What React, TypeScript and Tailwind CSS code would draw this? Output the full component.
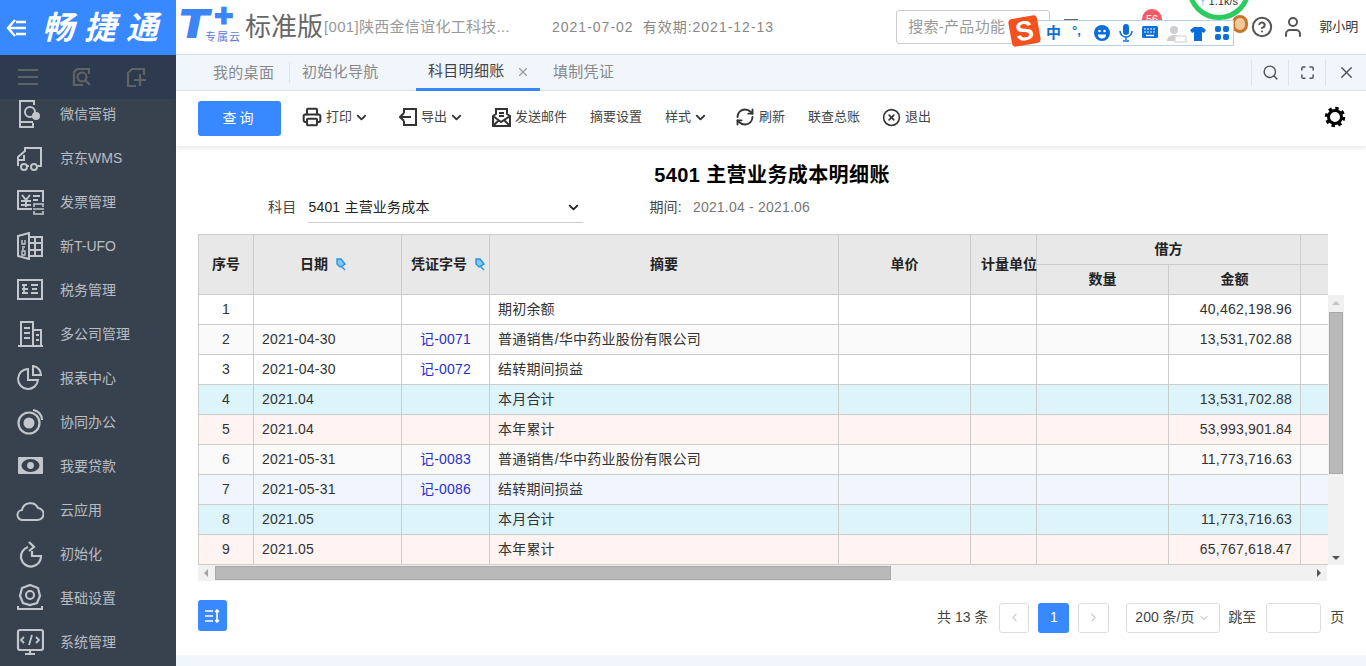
import type { ReactNode } from "react";
import { ChevronDown, ChevronLeft, ChevronRight, CircleHelp, CircleX, Maximize, Printer, RefreshCw, Search, User, X } from "lucide-react";

const FONT = "font-['Liberation_Sans','Noto_Sans_CJK_SC',sans-serif]";

function SideIcon({ children }: { children: ReactNode }) {
  return (
    <svg width="28" height="28" viewBox="0 0 28 28" fill="none" stroke="#c3c7cb" strokeWidth="2" className="shrink-0">
      {children}
    </svg>
  );
}

const menu: { label: string; icon: ReactNode }[] = [
  {
    label: "微信营销",
    icon: (
      <>
        <path d="M18 5V1H4v26h13v-4M4 22h13" />
        <circle cx="14" cy="12" r="5" />
        <circle cx="20" cy="16" r="4" fill="#c3c7cb" stroke="none" />
      </>
    ),
  },
  {
    label: "京东WMS",
    icon: (
      <>
        <path d="M2 22v-9l7-6V4h16v18h-3M13 22h-2" />
        <path d="M2 16h6v-5" />
        <circle cx="8" cy="23" r="3" />
        <circle cx="18" cy="23" r="3" />
      </>
    ),
  },
  {
    label: "发票管理",
    icon: (
      <>
        <path d="M16 21H2V3h25v11" />
        <path d="M6 7l4 5 4-5M5 13h10M5 17h10M10 12v7M17 8h7M17 12h5" />
        <path d="M18 19v-3h9v3M18 23v3h9v-3M17 21h11" strokeWidth="1.6" />
      </>
    ),
  },
  {
    label: "新T-UFO",
    icon: (
      <>
        <path d="M2 4l11-3v26L2 24z" />
        <path d="M13 5h13v19H13M19 5v19M13 11h13M13 18h13" />
        <path d="M6 8v4h3V8M6 15h3M6 17h2M6 19h3v4H6z" strokeWidth="1.4" />
      </>
    ),
  },
  {
    label: "税务管理",
    icon: (
      <>
        <rect x="2" y="4" width="24" height="19" />
        <path d="M6 9h5M6 13h6M6 17h6M8 9v9M15 9h7M16 13h5M15 17h7" strokeWidth="1.8" />
      </>
    ),
  },
  {
    label: "多公司管理",
    icon: (
      <>
        <path d="M5 25V2h12v23M17 10h8v15M2 26h25" />
        <path d="M8 8h6M8 13h6M8 18h6M20 15h3M20 20h3" />
      </>
    ),
  },
  {
    label: "报表中心",
    icon: (
      <>
        <path d="M12 5a10 10 0 1 0 10 11H12z" />
        <path d="M17 2a9 9 0 0 1 8 9h-8z" />
      </>
    ),
  },
  {
    label: "协同办公",
    icon: (
      <>
        <circle cx="13" cy="15" r="10.5" strokeWidth="2.2" />
        <circle cx="13" cy="15" r="5.5" fill="#c3c7cb" stroke="none" />
        <path d="M17 2a10 10 0 0 1 9 10" strokeWidth="2.2" />
      </>
    ),
  },
  {
    label: "我要贷款",
    icon: (
      <>
        <rect x="2" y="5" width="25" height="17" rx="1" fill="#c3c7cb" stroke="none" />
        <ellipse cx="14.5" cy="13.5" rx="9" ry="6.5" fill="#38424f" stroke="none" />
        <circle cx="14.5" cy="13.5" r="3.4" fill="#c3c7cb" stroke="none" />
      </>
    ),
  },
  {
    label: "云应用",
    icon: <path d="M8 24H7a5 5 0 0 1-1-10 8.500 8.500 0 0 1 16-2 6 6 0 0 1-1 12z" />,
  },
  {
    label: "初始化",
    icon: (
      <>
        <path d="M12 7a10 10 0 1 0 13 9H16v-5" strokeWidth="2.2" />
        <path d="M13 2l5 5-5 4" strokeWidth="2.2" />
      </>
    ),
  },
  {
    label: "基础设置",
    icon: (
      <>
        <path d="M14 1l8 3 2 8-3 7-7 2-7-2-3-7 2-8z" strokeWidth="2.2" />
        <circle cx="14" cy="11" r="4" />
        <path d="M2 22v3h24v-3" />
      </>
    ),
  },
  {
    label: "系统管理",
    icon: (
      <>
        <rect x="2" y="2" width="25" height="20" rx="2" strokeWidth="2.2" />
        <path d="M14 22v3M9 26h10" strokeWidth="2.2" />
        <path d="M8 9l-3 3 3 3M20 9l3 3-3 3M16 7l-3 10" strokeWidth="1.8" />
      </>
    ),
  },
];

type Row = { no: number; date: string; voucher: string; note: string; amount: string; bg: string };

const rows: Row[] = [
  { no: 1, date: "", voucher: "", note: "期初余额", amount: "40,462,198.96", bg: "bg-white" },
  { no: 2, date: "2021-04-30", voucher: "记-0071", note: "普通销售/华中药业股份有限公司", amount: "13,531,702.88", bg: "bg-[#fafafa]" },
  { no: 3, date: "2021-04-30", voucher: "记-0072", note: "结转期间损益", amount: "", bg: "bg-white" },
  { no: 4, date: "2021.04", voucher: "", note: "本月合计", amount: "13,531,702.88", bg: "bg-[#ddf4fa]" },
  { no: 5, date: "2021.04", voucher: "", note: "本年累计", amount: "53,993,901.84", bg: "bg-[#fff4f2]" },
  { no: 6, date: "2021-05-31", voucher: "记-0083", note: "普通销售/华中药业股份有限公司", amount: "11,773,716.63", bg: "bg-[#fafafa]" },
  { no: 7, date: "2021-05-31", voucher: "记-0086", note: "结转期间损益", amount: "", bg: "bg-[#f1f6fe]" },
  { no: 8, date: "2021.05", voucher: "", note: "本月合计", amount: "11,773,716.63", bg: "bg-[#ddf4fa]" },
  { no: 9, date: "2021.05", voucher: "", note: "本年累计", amount: "65,767,618.47", bg: "bg-[#fff4f2]" },
];

function Cols() {
  return (
    <colgroup>
      <col className="w-[55px]" />
      <col className="w-[148px]" />
      <col className="w-[88px]" />
      <col className="w-[349px]" />
      <col className="w-[132px]" />
      <col className="w-[66px]" />
      <col className="w-[132px]" />
      <col className="w-[132px]" />
      <col className="w-[132px]" />
    </colgroup>
  );
}

function Pin() {
  return (
    <svg width="13" height="13" viewBox="0 0 13 13" fill="#1e96e8" stroke="#1e96e8" strokeWidth="1.4" className="inline-block ml-[6px] align-[-2px]">
      <path d="M3 1h4l4 5-3 2-2 1-3-3zM7 8l4 4" fillOpacity="0.45" />
    </svg>
  );
}

function Tool({ icon, label, chevron, className }: { icon?: ReactNode; label: string; chevron?: boolean; className: string }) {
  return (
    <div className={`flex items-center text-[13px] text-[#444] ${className}`}>
      {icon}
      <span>{label}</span>
      {chevron && <ChevronDown size={15} strokeWidth={3} className="ml-[2px] text-[#333]" />}
    </div>
  );
}

const th = "border border-[#ccc] bg-[#e8e8e8] font-bold text-[14px] text-[#222] text-center p-0 pb-[1px]";
const td = "border border-[#ccc] text-[14px] tracking-[0.2px] h-[30px] p-0 pb-[1px]";

export default function App() {
  return (
    <div className={`relative w-[1366px] h-[666px] overflow-hidden flex bg-white ${FONT}`}>
      {/* left nav */}
      <aside className="w-[176px] shrink-0 flex flex-col bg-[#38424f]">
        <div className="h-[55px] bg-[#3888ff] flex items-center pl-[6px] text-white">
          <svg width="21" height="20" viewBox="0 0 21 20" fill="none" stroke="white" strokeWidth="2.4" className="shrink-0">
            <path d="M9 2L2 10l7 8M4 10h16M10 4h10M10 16h10" />
          </svg>
          <span className="ml-[15px] text-[32px] leading-[40px] font-bold italic tracking-[10px] whitespace-nowrap">畅捷通</span>
        </div>
        <div className="h-[44px] bg-[#2e3a4d] flex items-center pl-[18px] gap-[34px] text-[#5f6368] z-10">
          <svg width="20" height="18" viewBox="0 0 20 18" stroke="currentColor" strokeWidth="2.2">
            <path d="M0 2h20M0 9h20M0 16h20" />
          </svg>
          <svg width="20" height="20" viewBox="0 0 20 20" fill="none" stroke="currentColor" strokeWidth="2.2">
            <path d="M17 7V2H5L2 5v13h9" />
            <circle cx="10" cy="10" r="4.500" />
            <path d="M13 13l5 5" />
          </svg>
          <svg width="20" height="20" viewBox="0 0 20 20" fill="none" stroke="currentColor" strokeWidth="2.2">
            <path d="M18 8V2H6L2 6v13h8" />
            <path d="M14 7v12M8 13h12" />
          </svg>
        </div>
        <nav className="flex-1 overflow-hidden">
          <div className="-mt-[7px]">
            {menu.map((m) => (
              <div key={m.label} className="h-[44px] flex items-center pl-[16px] text-[14px] text-[#b9bdc2]">
                <SideIcon>{m.icon}</SideIcon>
                <span className="ml-[16px] whitespace-nowrap">{m.label}</span>
              </div>
            ))}
          </div>
        </nav>
      </aside>

      <main className="flex-1 min-w-0 flex flex-col">
        {/* top bar */}
        <header className="h-[55px] shrink-0 flex items-center border-b border-[#dcdfe3] pl-[5px] bg-white">
          <div className="relative w-[60px] h-[44px] shrink-0 -mt-[6px]">
            <span className="absolute -left-[4px] top-0 origin-left scale-x-[1.2] font-['Inter','Liberation_Sans',sans-serif] text-[40px] leading-[44px] font-black italic text-[#3d85f5]">T</span>
            <span className="absolute left-[31px] -top-[10px] font-['Inter','Liberation_Sans',sans-serif] text-[34px] leading-[44px] font-black text-[#3d85f5]">+</span>
            <span className="absolute left-[24px] top-[30px] text-[11px] tracking-[1px] leading-[11px] text-[#5b7be0] whitespace-nowrap">专属云</span>
          </div>
          <span className="text-[26px] leading-[32px] text-[#666] ml-[4px] whitespace-nowrap">标准版</span>
          <span className="ml-[1px] w-[210px] text-[15px] tracking-[0.3px] text-[#999] whitespace-nowrap">[001]陕西金信谊化工科技...</span>
          <span className="ml-[18px] text-[14px] tracking-[1px] text-[#888] whitespace-nowrap">2021-07-02</span>
          <span className="ml-[9px] text-[14px] tracking-[1px] text-[#888] whitespace-nowrap">有效期:2021-12-13</span>
          <div className="ml-[122px] w-[154px] h-[34px] shrink-0 border border-[#ccc] rounded-[3px] pl-[11px] flex items-center text-[15px] tracking-[0.3px] text-[#999] whitespace-nowrap">
            搜索-产品功能
          </div>
          <CircleHelp size={22} strokeWidth={2.2} className="ml-[201px] text-[#555] shrink-0" />
          <User size={24} strokeWidth={2} className="ml-[8px] text-[#555] shrink-0" />
          <span className="ml-[14px] text-[13px] text-[#333] whitespace-nowrap">郭小明</span>
        </header>

        {/* tabs */}
        <div className="h-[36px] shrink-0 flex items-center bg-[#f1f6fd] border-b border-[#e3e8ef] text-[15px] tracking-[0.3px] text-[#888] pl-[37px]">
          <span className="w-[77px] border-r border-[#dfe3e8] leading-[20px] whitespace-nowrap">我的桌面</span>
          <span className="ml-[12px] w-[114px] whitespace-nowrap">初始化导航</span>
          <div className="relative h-full w-[124px] flex items-center pl-[12px] text-[#444] border-b-[3px] border-[#3888ff] mt-[1px]">
            <span className="whitespace-nowrap">科目明细账</span>
            <X size={14} className="ml-[11px] text-[#999]" />
          </div>
          <span className="ml-[13px] whitespace-nowrap">填制凭证</span>
          <div className="ml-auto flex h-[26px] items-center text-[#555]">
            <div className="w-[37px] h-full flex items-center justify-center border-l border-[#dfe3e8]">
              <Search size={17} strokeWidth={2} />
            </div>
            <div className="w-[37px] h-full flex items-center justify-center border-l border-[#dfe3e8]">
              <Maximize size={15} strokeWidth={2.4} />
            </div>
            <div className="w-[41px] h-full flex items-center justify-center border-l border-[#dfe3e8]">
              <X size={19} strokeWidth={1.8} />
            </div>
          </div>
        </div>

        {/* toolbar */}
        <div className="h-[55px] shrink-0 flex items-center pl-[22px] pb-[3px] shadow-[0_2px_5px_rgba(0,0,0,0.1)] bg-white relative">
          <button className="w-[83px] h-[35px] mt-[2px] rounded-[3px] bg-[#3888ff] text-white text-[14px] tracking-[3px]">查询</button>
          <Tool
            className="ml-[21px]"
            label="打印"
            chevron
            icon={<Printer size={20} strokeWidth={2.4} className="mr-[4px] text-[#333]" />}
          />
          <Tool
            className="ml-[30px]"
            label="导出"
            chevron
            icon={
              <svg width="18" height="18" viewBox="0 0 18 18" fill="none" stroke="#333" strokeWidth="2" className="mr-[4px]">
                <path d="M5 5V1h12v16H5v-4M1 9h11M5 5L1 9l4 4" />
              </svg>
            }
          />
          <Tool
            className="ml-[28px]"
            label="发送邮件"
            icon={
              <svg width="19" height="19" viewBox="0 0 19 19" fill="none" stroke="#333" strokeWidth="2" className="mr-[4px]">
                <path d="M1 8v10h17V8L15 6V1H4v5zM1 8l8 6 9-6M1 18l6-6M18 18l-6-6M7 5h5M7 8h5" />
              </svg>
            }
          />
          <Tool className="ml-[23px]" label="摘要设置" />
          <Tool className="ml-[23px]" label="样式" chevron />
          <Tool
            className="ml-[27px]"
            label="刷新"
            icon={<RefreshCw size={20} strokeWidth={2.2} className="mr-[4px] text-[#333]" />}
          />
          <Tool className="ml-[23px]" label="联查总账" />
          <Tool
            className="ml-[22px]"
            label="退出"
            icon={<CircleX size={19} strokeWidth={2} className="mr-[4px] text-[#333]" />}
          />
          <svg width="22" height="22" viewBox="0 0 22 22" fill="none" stroke="#000" className="ml-auto mr-[20px]">
            <circle cx="11" cy="11" r="6.500" strokeWidth="3" />
            <circle cx="11" cy="11" r="8.500" strokeWidth="3.500" strokeDasharray="3.300 3.375" />
          </svg>
        </div>

        {/* report */}
        <section className="flex-1 min-h-0 pl-[22px] flex flex-col">
          <h1 className="mt-[14px] h-[30px] leading-[30px] text-[20px] tracking-[0.4px] font-bold text-black text-center pr-[20px]">
            5401 主营业务成本明细账
          </h1>
          <div className="h-[30px] mt-[3px] flex items-center text-[14px] tracking-[0.2px]">
            <span className="ml-[70px] -mt-[1px] text-[#444]">科目</span>
            <div className="ml-[12px] w-[275px] h-full flex items-center justify-between pr-[2px] border-b border-[#ccc] text-[#222]">
              <span>5401 主营业务成本</span>
              <ChevronDown size={15} strokeWidth={3} className="text-[#222]" />
            </div>
            <span className="ml-[66px] -mt-[1px] text-[#444]">期间:</span>
            <span className="ml-[11px] -mt-[1px] text-[#777]">2021.04 - 2021.06</span>
          </div>

          <div className="mt-[11px] w-[1130px] overflow-hidden">
            <table className="table-fixed border-collapse w-[1234px]">
              <Cols />
              <thead>
                <tr className="h-[30px]">
                  <th rowSpan={2} className={th}>序号</th>
                  <th rowSpan={2} className={`${th} pr-[8px]`}>日期<Pin /></th>
                  <th rowSpan={2} className={`${th} pl-[6px]`}>凭证字号<Pin /></th>
                  <th rowSpan={2} className={th}>摘要</th>
                  <th rowSpan={2} className={th}>单价</th>
                  <th rowSpan={2} className={`${th} whitespace-nowrap pl-[10px]`}>计量单位</th>
                  <th colSpan={2} className={th}>借方</th>
                  <th className={th}></th>
                </tr>
                <tr className="h-[30px]">
                  <th className={th}>数量</th>
                  <th className={th}>金额</th>
                  <th className={th}></th>
                </tr>
              </thead>
            </table>
          </div>

          <div className="flex w-[1146px]">
            <div className="w-[1130px] h-[270px] overflow-hidden">
              <table className="table-fixed border-collapse w-[1234px] -mt-[1px]">
                <Cols />
                <tbody>
                  {rows.map((r) => (
                    <tr key={r.no} className={r.bg}>
                      <td className={`${td} text-[#333] text-center`}>{r.no}</td>
                      <td className={`${td} text-[#333] pl-[8px]`}>{r.date}</td>
                      <td className={`${td} text-[#2a2fd0] text-center`}>{r.voucher}</td>
                      <td className={`${td} text-[#333] pl-[8px]`}>{r.note}</td>
                      <td className={td}></td>
                      <td className={td}></td>
                      <td className={td}></td>
                      <td className={`${td} text-[#333] text-right pr-[8px]`}>{r.amount}</td>
                      <td className={td}></td>
                    </tr>
                  ))}
                </tbody>
              </table>
            </div>
            <div className="w-[16px] h-[270px] bg-[#f1f1f1] flex flex-col items-center relative">
              <span className="mt-[6px] w-0 h-0 border-x-[4px] border-x-transparent border-b-[4px] border-b-[#c4c4c4]"></span>
              <div className="mt-[7px] w-[14px] h-[162px] bg-[#b9b9b9] border border-[#a8a8a8]"></div>
              <span className="mt-auto mb-[5px] w-0 h-0 border-x-[4px] border-x-transparent border-t-[4px] border-t-[#555]"></span>
            </div>
          </div>

          <div className="w-[1129px] h-[16px] bg-[#f1f1f1] flex items-center">
            <span className="ml-[6px] w-0 h-0 border-y-[4px] border-y-transparent border-r-[4px] border-r-[#a3a3a3]"></span>
            <div className="ml-[7px] w-[676px] h-[14px] bg-[#b9b9b9] border border-[#a8a8a8]"></div>
            <span className="ml-auto mr-[6px] w-0 h-0 border-y-[4px] border-y-transparent border-l-[4px] border-l-[#555]"></span>
          </div>

          <div className="mt-[19px] flex items-start text-[14px] text-[#444]">
            <div className="w-[29px] h-[31px] rounded-[3px] bg-[#3888ff] flex items-center justify-center">
              <svg width="15" height="14" viewBox="0 0 15 14" fill="none" stroke="white" strokeWidth="2">
                <path d="M0 2h8M0 7h8M0 12h8M12 1v12M10 3l2-2 2 2M10 11l2 2 2-2" strokeWidth="1.7" />
              </svg>
            </div>
            <div className="ml-[710px] mt-[2px] h-[31px] flex items-center">
              <span className="whitespace-nowrap">共 13 条</span>
              <div className="ml-[11px] w-[30px] h-[30px] border border-[#ddd] rounded-[3px] flex items-center justify-center text-[#ccc]">
                <ChevronLeft size={13} />
              </div>
              <div className="ml-[9px] w-[31px] h-[30px] bg-[#3888ff] rounded-[3px] flex items-center justify-center text-white">1</div>
              <div className="ml-[9px] w-[31px] h-[30px] border border-[#ddd] rounded-[3px] flex items-center justify-center text-[#ccc]">
                <ChevronRight size={13} />
              </div>
              <div className="ml-[17px] w-[94px] h-[30px] border border-[#ddd] rounded-[3px] flex items-center pl-[8px] whitespace-nowrap">
                200 条/页
                <ChevronDown size={12} className="ml-[3px] text-[#aaa]" />
              </div>
              <span className="ml-[8px] whitespace-nowrap">跳至</span>
              <div className="ml-[10px] w-[55px] h-[30px] mt-[1px] border border-[#ddd] rounded-[3px]"></div>
              <span className="ml-[9px]">页</span>
            </div>
          </div>
        </section>

        <div className="h-[11px] shrink-0 bg-[#f1f6fd]"></div>
      </main>

      {/* things sitting on top of the app: badge, desktop widgets, IME bar */}
      <span className="absolute left-[1142px] top-[9px] w-[20px] h-[20px] rounded-full bg-[#f25a66] text-white text-[11px] leading-[20px] text-center">56</span>
      <span className="absolute left-[1064px] top-[19px] w-[14px] h-[3px] bg-[#666]"></span>
      <div className="absolute left-[1232px] top-[15px] w-[16px] h-[18px] rounded-full border-[3px] border-[#c8762a] bg-[#f3c99b]"></div>
      <div className="absolute left-[1187px] -top-[44px] w-[64px] h-[64px] rounded-full bg-white border-[5px] border-[#2bcb5f] flex items-end justify-center pb-[7px] text-[11px] leading-[13px] text-[#333] whitespace-nowrap">
        <span><span className="text-[#1e88e5]">↑</span> 1.1k/s</span>
      </div>
      <div className="absolute left-[1020px] top-[20px] w-[214px] h-[26px] bg-white border border-[#b8cfe8] flex items-center text-[#0a6fd8]">
        <span className="absolute left-[25px] top-[2px] text-[15px] leading-[20px] font-bold">中</span>
        <span className="absolute left-[51px] top-[2px] text-[13px] leading-[16px] font-bold whitespace-nowrap">°,</span>
        <svg width="16" height="16" viewBox="0 0 16 16" className="absolute left-[73px] top-[4px]">
          <circle cx="8" cy="8" r="8" fill="#0a6fd8" />
          <circle cx="5.500" cy="6" r="1.300" fill="white" />
          <circle cx="10.500" cy="6" r="1.300" fill="white" />
          <path d="M4 9.500a4 4 0 0 0 8 0z" fill="white" />
        </svg>
        <svg width="14" height="18" viewBox="0 0 14 18" fill="none" className="absolute left-[98px] top-[3px]">
          <rect x="4" y="0" width="6" height="11" rx="3" fill="#0a6fd8" />
          <path d="M1 7a6 6 0 0 0 12 0M7 13v3M4 17h6" stroke="#0a6fd8" strokeWidth="1.500" />
        </svg>
        <svg width="16" height="14" viewBox="0 0 16 14" className="absolute left-[121px] top-[5px]">
          <rect width="16" height="12" rx="1.500" fill="#0a6fd8" />
          <path d="M2 3h12M2 6h12" stroke="white" strokeDasharray="2 1" />
          <path d="M4 9.500h8" stroke="white" strokeWidth="1.500" />
        </svg>
        <svg width="20" height="18" viewBox="0 0 20 18" className="absolute left-[146px] top-[4px]">
          <circle cx="7" cy="5" r="4" fill="#cfcfcf" />
          <path d="M0 16c0-4 3-6 7-6s6 1 7 2v4z" fill="#cfcfcf" />
          <rect x="8" y="11" width="11" height="6" fill="white" stroke="#cfcfcf" />
        </svg>
        <svg width="16" height="14" viewBox="0 0 16 14" className="absolute left-[169px] top-[6px]">
          <path d="M4 0h8l4 3-2 3-2-1v9H4V5L2 6 0 3z" fill="#0a6fd8" />
        </svg>
        <svg width="14" height="14" viewBox="0 0 14 14" className="absolute left-[194px] top-[5px]" fill="#0a6fd8">
          <rect width="6" height="6" rx="2" />
          <rect x="8" width="6" height="6" rx="2" />
          <rect y="8" width="6" height="6" rx="2" />
          <rect x="8" y="8" width="6" height="6" rx="2" />
        </svg>
      </div>
      <div className="absolute left-[1010px] top-[17px] w-[29px] h-[28px] rounded-[4px] bg-[#f4511e] -rotate-[10deg] flex items-center justify-center text-white text-[27px] leading-none font-bold">S</div>
    </div>
  );
}
